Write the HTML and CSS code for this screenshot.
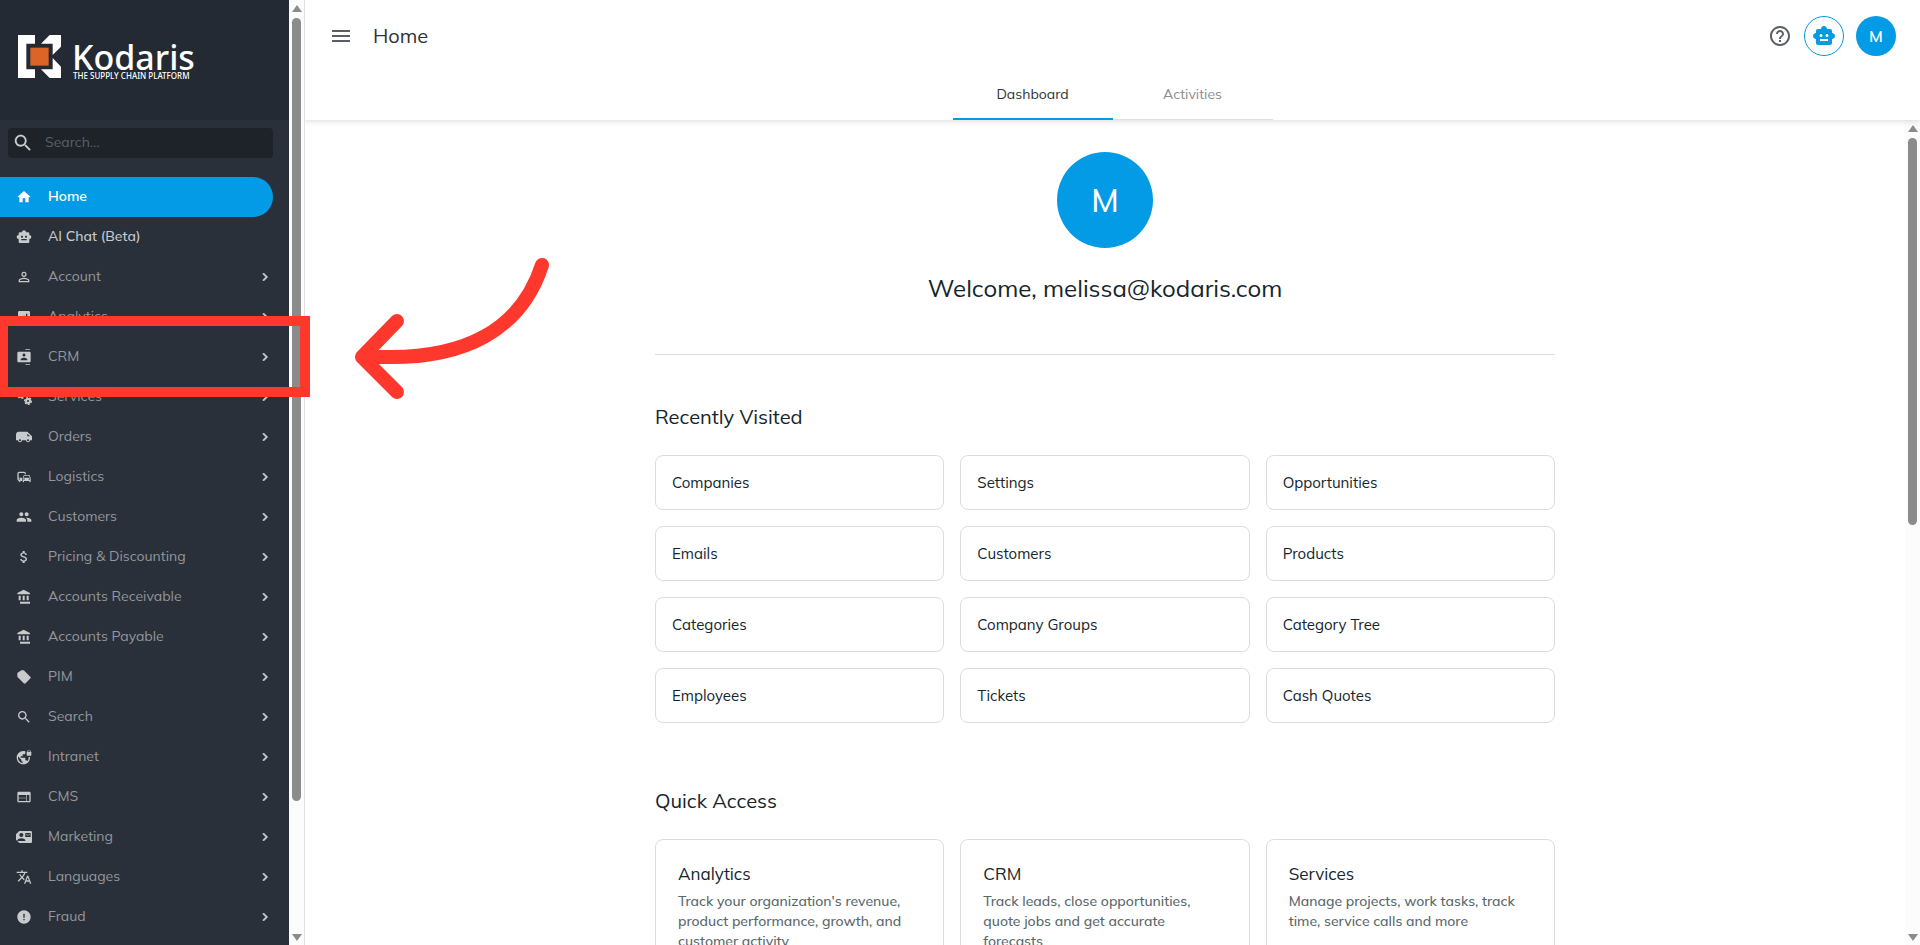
FILE: index.html
```html
<!DOCTYPE html>
<html lang="en">
<head>
    <meta charset="UTF-8">
    <meta name="viewport" content="width=device-width, initial-scale=1.0">
    <title>Home - Kodaris</title>
    <link rel="stylesheet" href="styles.css">
</head>
<body>
    <svg class="sprite" aria-hidden="true">
        <symbol id="i-home" viewBox="0 0 24 24"><path d="M10 20v-6h4v6h5v-8h3L12 3 2 12h3v8z"/></symbol>
        <symbol id="i-robot" viewBox="0 0 24 24"><path d="M20 9V7c0-1.1-.9-2-2-2h-3c0-1.66-1.34-3-3-3S9 3.34 9 5H6c-1.1 0-2 .9-2 2v2c-1.66 0-3 1.34-3 3s1.34 3 3 3v4c0 1.1.9 2 2 2h12c1.1 0 2-.9 2-2v-4c1.66 0 3-1.34 3-3s-1.34-3-3-3zM7.5 11.5c0-.83.67-1.5 1.5-1.5s1.5.67 1.5 1.5S9.83 13 9 13s-1.5-.67-1.5-1.5zM16 17H8v-2h8v2zm-1-4c-.83 0-1.5-.67-1.5-1.5S14.17 10 15 10s1.5.67 1.5 1.5S15.83 13 15 13z"/></symbol>
        <symbol id="i-person" viewBox="0 0 24 24"><path d="M12 5.9c1.16 0 2.1.94 2.1 2.1s-.94 2.1-2.1 2.1S9.9 9.16 9.9 8s.94-2.1 2.1-2.1m0 9c2.97 0 6.1 1.46 6.1 2.1v1.1H5.9V17c0-.64 3.13-2.1 6.1-2.1M12 4C9.79 4 8 5.79 8 8s1.79 4 4 4 4-1.79 4-4-1.79-4-4-4zm0 9c-2.67 0-8 1.34-8 4v3h16v-3c0-2.66-5.33-4-8-4z"/></symbol>
        <symbol id="i-analytics" viewBox="0 0 24 24"><path d="M19 3H5c-1.1 0-2 .9-2 2v14c0 1.1.9 2 2 2h14c1.1 0 2-.9 2-2V5c0-1.1-.9-2-2-2zM9 17H7v-5h2v5zm4 0h-2v-3h2v3zm0-5h-2v-2h2v2zm4 5h-2V7h2v10z"/></symbol>
        <symbol id="i-contacts" viewBox="0 0 24 24"><path d="M21 0h-7v1h7V0zM14 24h7v-1h-7v1zM20 4H4c-1.1 0-2 .9-2 2v12c0 1.1.9 2 2 2h16c1.1 0 2-.9 2-2V6c0-1.1-.9-2-2-2zm-8 2.75c1.24 0 2.25 1.01 2.25 2.25s-1.01 2.25-2.25 2.25S9.75 10.24 9.75 9 10.76 6.75 12 6.75zM17 17H7v-1.5c0-1.67 3.33-2.5 5-2.5s5 .83 5 2.5V17z"/></symbol>
        <symbol id="i-gears" viewBox="0 0 24 24"><circle cx="8" cy="8" r="4" fill="none" stroke="currentColor" stroke-width="3"/><circle cx="8" cy="8" r="6" fill="none" stroke="currentColor" stroke-width="2" stroke-dasharray="3 3"/><circle cx="18" cy="18" r="3" fill="none" stroke="currentColor" stroke-width="3"/><circle cx="18" cy="18" r="5" fill="none" stroke="currentColor" stroke-width="2" stroke-dasharray="3 2"/></symbol>
        <symbol id="i-truck" viewBox="0 0 24 24"><path d="M17 4H4C2 4 0 6 0 8v9h3c0 1.66 1.34 3 3 3s3-1.34 3-3h6c0 1.66 1.34 3 3 3s3-1.34 3-3h3v-6l-7-7zM6 18.5c-.83 0-1.5-.67-1.5-1.5s.67-1.5 1.5-1.5 1.5.67 1.5 1.5-.67 1.5-1.5 1.5zM17 7l4 4h-4V7zm1 11.5c-.83 0-1.5-.67-1.5-1.5s.67-1.5 1.5-1.5 1.5.67 1.5 1.5-.67 1.5-1.5 1.5z"/></symbol>
        <symbol id="i-commute" viewBox="0 0 24 24"><path d="M12 4H5C3.34 4 2 5.34 2 7v8c0 1.66 1.34 3 3 3l-1 1v1h1l2-2.03L9 18v-5H4V5.98L13 6v2h2V7c0-1.66-1.34-3-3-3zM5 14c.55 0 1 .45 1 1s-.45 1-1 1-1-.45-1-1 .45-1 1-1zm15.57-4.34c-.14-.4-.52-.66-.97-.66h-7.19c-.46 0-.83.26-.98.66L10 13.77l.01 5.51c0 .38.31.72.69.72h.62c.38 0 .68-.38.68-.76V18h8v1.24c0 .38.31.76.69.76h.61c.38 0 .69-.34.69-.72l.01-1.37v-4.14l-1.43-4.11zm-8.16.34h7.19l1.03 3h-9.25l1.03-3zM12 16c-.55 0-1-.45-1-1s.45-1 1-1 1 .45 1 1-.45 1-1 1zm8 0c-.55 0-1-.45-1-1s.45-1 1-1 1 .45 1 1-.45 1-1 1z"/></symbol>
        <symbol id="i-people" viewBox="0 0 24 24"><path d="M16 11c1.66 0 2.99-1.34 2.99-3S17.66 5 16 5c-1.66 0-3 1.34-3 3s1.34 3 3 3zm-8 0c1.66 0 2.99-1.34 2.99-3S9.66 5 8 5C6.34 5 5 6.34 5 8s1.34 3 3 3zm0 2c-2.33 0-7 1.17-7 3.5V19h14v-2.5c0-2.33-4.67-3.5-7-3.5zm8 0c-.29 0-.62.02-.97.05 1.16.84 1.97 1.97 1.97 3.45V19h6v-2.5c0-2.33-4.67-3.5-7-3.5z"/></symbol>
        <symbol id="i-dollar" viewBox="0 0 24 24"><path d="M11.8 10.9c-2.27-.59-3-1.2-3-2.15 0-1.09 1.01-1.85 2.7-1.85 1.78 0 2.44.85 2.5 2.1h2.21c-.07-1.72-1.12-3.3-3.21-3.81V3h-3v2.16c-1.94.42-3.5 1.68-3.5 3.61 0 2.31 1.91 3.46 4.7 4.13 2.5.6 3 1.48 3 2.41 0 .69-.49 1.79-2.7 1.79-2.06 0-2.87-.92-2.98-2.1h-2.2c.12 2.19 1.76 3.42 3.68 3.83V21h3v-2.15c1.95-.37 3.5-1.5 3.5-3.55 0-2.84-2.43-3.81-4.7-4.4z"/></symbol>
        <symbol id="i-bank" viewBox="0 0 24 24"><path d="M4 10v7h3v-7H4zm6 0v7h3v-7h-3zM6 22h15v-3H6v3zm10-12v7h3v-7h-3zm-4.5-9L2 6v2h19V6l-9.5-5z"/></symbol>
        <symbol id="i-tag" viewBox="0 0 24 24"><path d="M21.41 11.58l-9-9C12.05 2.22 11.55 2 11 2H8L2 6v5c0 .55.22 1.05.59 1.42l9 9c.36.36.86.58 1.41.58s1.05-.22 1.41-.59l7-7c.37-.36.59-.86.59-1.41s-.23-1.06-.59-1.42z"/></symbol>
        <symbol id="i-search" viewBox="0 0 24 24"><path d="M15.5 14h-.79l-.28-.27C15.41 12.59 16 11.11 16 9.5 16 5.91 13.09 3 9.5 3S3 5.91 3 9.5 5.91 16 9.5 16c1.61 0 3.09-.59 4.23-1.57l.27.28v.79l5 4.99L20.49 19l-4.99-5zm-6 0C7.01 14 5 11.99 5 9.5S7.01 5 9.5 5 14 7.01 14 9.5 11.99 14 9.5 14z"/></symbol>
        <symbol id="i-globe" viewBox="0 0 24 24"><path d="M22 4v-.5C22 2.12 20.88 1 19.5 1S17 2.12 17 3.5V4c-.55 0-1 .45-1 1v4c0 .55.45 1 1 1h5c.55 0 1-.45 1-1V5c0-.55-.45-1-1-1zm-.8 0h-3.4v-.5c0-.94.76-1.7 1.7-1.7s1.7.76 1.7 1.7V4zm-2.28 8c.04.33.08.66.08 1 0 2.08-.8 3.97-2.1 5.39-.26-.81-1-1.39-1.9-1.39h-1v-3c0-.55-.45-1-1-1H7v-2h2c.55 0 1-.45 1-1V8h2c1.1 0 2-.9 2-2V3.46c-.95-.3-1.95-.46-3-.46C5.48 3 1 7.48 1 13s4.48 10 10 10 10-4.48 10-10c0-.34-.02-.67-.05-1h-2.03zM10 20.93c-3.95-.49-7-3.85-7-7.93 0-.62.08-1.21.21-1.79L8 16v1c0 1.1.9 2 2 2v1.93z"/></symbol>
        <symbol id="i-web" viewBox="0 0 24 24"><path d="M20 4H4c-1.1 0-1.99.9-1.99 2L2 18c0 1.1.9 2 2 2h16c1.1 0 2-.9 2-2V6c0-1.1-.9-2-2-2zm-5 14H4v-4h11v4zm0-5H4V9h11v4zm5 5h-4V9h4v9z"/></symbol>
        <symbol id="i-mail" viewBox="0 0 24 24"><path d="M21 8V7l-3 2-3-2v1l3 2 3-2zm1-5H5L0 8v8l5 5h17c1.1 0 1.99-.9 1.99-2L24 5c0-1.1-.9-2-2-2zM8 6c1.66 0 3 1.34 3 3s-1.34 3-3 3-3-1.34-3-3 1.34-3 3-3zm6 12H2v-1c0-2 4-3.1 6-3.1s6 1.1 6 3.1v1zm8-6h-8V6h8v6z"/></symbol>
        <symbol id="i-translate" viewBox="0 0 24 24"><path d="M12.87 15.07l-2.54-2.51.03-.03c1.74-1.94 2.98-4.17 3.71-6.53H17V4h-7V2H8v2H1v1.99h11.17C11.5 7.92 10.44 9.75 9 11.35 8.07 10.32 7.3 9.19 6.69 8h-2c.73 1.63 1.73 3.17 2.98 4.56l-5.09 5.02L4 19l5-5 3.11 3.11.76-2.04zM18.5 10h-2L12 22h2l1.12-3h4.75L21 22h2l-4.5-12zm-2.62 7l1.62-4.33L19.12 17h-3.24z"/></symbol>
        <symbol id="i-error" viewBox="0 0 24 24"><path d="M12 2C6.48 2 2 6.48 2 12s4.48 10 10 10 10-4.48 10-10S17.52 2 12 2zm1 15h-2v-2h2v2zm0-4h-2V7h2v6z"/></symbol>
        <symbol id="i-chevron" viewBox="0 0 24 24"><path stroke="currentColor" d="M10 6L8.59 7.41 13.17 12l-4.58 4.59L10 18l6-6z"/></symbol>
        <symbol id="i-menu" viewBox="0 0 24 24"><path d="M3 18h18v-2H3v2zm0-5h18v-2H3v2zm0-7v2h18V6H3z"/></symbol>
        <symbol id="i-help" viewBox="0 0 24 24"><path d="M11 18h2v-2h-2v2zm1-16C6.48 2 2 6.48 2 12s4.48 10 10 10 10-4.48 10-10S17.52 2 12 2zm0 18c-4.41 0-8-3.59-8-8s3.59-8 8-8 8 3.59 8 8-3.59 8-8 8zm0-14c-2.21 0-4 1.79-4 4h2c0-1.1.9-2 2-2s2 .9 2 2c0 2-3 1.75-3 5h2c0-2.25 3-2.5 3-5 0-2.21-1.79-4-4-4z"/></symbol>
    </svg>

    <div class="app">
        <aside class="sidebar">
            <div class="sidebar-inner">
                <a class="brand" href="#">
                    <svg class="brand-mark" viewBox="53 105 129 129">
                        <path fill="#fff" d="M53 105h51v26H78v77h26v26H53zM148 105h34v35l-25 25v-34h-35zM157 174l25 26v34h-34l-26-26h35z"/>
                        <path fill="#dc6426" d="M90 143h55v54H90z"/>
                    </svg>
                    <span class="brand-text">
                        <span class="brand-name">Kodaris</span>
                        <span class="brand-tag">THE SUPPLY CHAIN PLATFORM</span>
                    </span>
                </a>

                <label class="search">
                    <svg class="search-icon"><use href="#i-search"/></svg>
                    <input type="text" placeholder="Search..." aria-label="Search">
                </label>

                <nav class="nav">
                    <a class="nav-item active" href="#"><svg class="icon"><use href="#i-home"/></svg><span>Home</span></a>
                    <a class="nav-item bright" href="#"><svg class="icon"><use href="#i-robot"/></svg><span>AI Chat (Beta)</span></a>
                    <a class="nav-item" href="#"><svg class="icon"><use href="#i-person"/></svg><span>Account</span><svg class="icon"><use href="#i-chevron"/></svg></a>
                    <a class="nav-item" href="#"><svg class="icon"><use href="#i-analytics"/></svg><span>Analytics</span><svg class="icon"><use href="#i-chevron"/></svg></a>
                    <a class="nav-item" href="#"><svg class="icon"><use href="#i-contacts"/></svg><span>CRM</span><svg class="icon"><use href="#i-chevron"/></svg></a>
                    <a class="nav-item" href="#"><svg class="icon"><use href="#i-gears"/></svg><span>Services</span><svg class="icon"><use href="#i-chevron"/></svg></a>
                    <a class="nav-item" href="#"><svg class="icon"><use href="#i-truck"/></svg><span>Orders</span><svg class="icon"><use href="#i-chevron"/></svg></a>
                    <a class="nav-item" href="#"><svg class="icon"><use href="#i-commute"/></svg><span>Logistics</span><svg class="icon"><use href="#i-chevron"/></svg></a>
                    <a class="nav-item" href="#"><svg class="icon"><use href="#i-people"/></svg><span>Customers</span><svg class="icon"><use href="#i-chevron"/></svg></a>
                    <a class="nav-item" href="#"><svg class="icon"><use href="#i-dollar"/></svg><span>Pricing &amp; Discounting</span><svg class="icon"><use href="#i-chevron"/></svg></a>
                    <a class="nav-item" href="#"><svg class="icon"><use href="#i-bank"/></svg><span>Accounts Receivable</span><svg class="icon"><use href="#i-chevron"/></svg></a>
                    <a class="nav-item" href="#"><svg class="icon"><use href="#i-bank"/></svg><span>Accounts Payable</span><svg class="icon"><use href="#i-chevron"/></svg></a>
                    <a class="nav-item" href="#"><svg class="icon"><use href="#i-tag"/></svg><span>PIM</span><svg class="icon"><use href="#i-chevron"/></svg></a>
                    <a class="nav-item" href="#"><svg class="icon"><use href="#i-search"/></svg><span>Search</span><svg class="icon"><use href="#i-chevron"/></svg></a>
                    <a class="nav-item" href="#"><svg class="icon"><use href="#i-globe"/></svg><span>Intranet</span><svg class="icon"><use href="#i-chevron"/></svg></a>
                    <a class="nav-item" href="#"><svg class="icon"><use href="#i-web"/></svg><span>CMS</span><svg class="icon"><use href="#i-chevron"/></svg></a>
                    <a class="nav-item" href="#"><svg class="icon"><use href="#i-mail"/></svg><span>Marketing</span><svg class="icon"><use href="#i-chevron"/></svg></a>
                    <a class="nav-item" href="#"><svg class="icon"><use href="#i-translate"/></svg><span>Languages</span><svg class="icon"><use href="#i-chevron"/></svg></a>
                    <a class="nav-item" href="#"><svg class="icon"><use href="#i-error"/></svg><span>Fraud</span><svg class="icon"><use href="#i-chevron"/></svg></a>
                </nav>
            </div>
            <div class="scrollbar">
                <span class="arrow-up"></span>
                <div class="track"><div class="thumb thumb-nav"></div></div>
                <span class="arrow-down"></span>
            </div>
        </aside>

        <div class="page">
            <header class="header">
                <div class="toolbar">
                    <button class="icon-btn" aria-label="Menu"><svg><use href="#i-menu"/></svg></button>
                    <h1>Home</h1>
                    <button class="icon-btn" aria-label="Help"><svg><use href="#i-help"/></svg></button>
                    <button class="round-btn outlined" aria-label="AI Chat"><svg><use href="#i-robot"/></svg></button>
                    <button class="round-btn">M</button>
                </div>
                <nav class="tabs">
                    <a class="tab active" href="#">Dashboard</a>
                    <a class="tab" href="#">Activities</a>
                </nav>
            </header>

            <div class="body">
                <main class="content">
                    <section class="welcome">
                        <div class="avatar">M</div>
                        <h2>Welcome, melissa@kodaris.com</h2>
                    </section>

                    <section class="recent">
                        <h3>Recently Visited</h3>
                        <div class="grid">
                            <a class="card" href="#">Companies</a>
                            <a class="card" href="#">Settings</a>
                            <a class="card" href="#">Opportunities</a>
                            <a class="card" href="#">Emails</a>
                            <a class="card" href="#">Customers</a>
                            <a class="card" href="#">Products</a>
                            <a class="card" href="#">Categories</a>
                            <a class="card" href="#">Company Groups</a>
                            <a class="card" href="#">Category Tree</a>
                            <a class="card" href="#">Employees</a>
                            <a class="card" href="#">Tickets</a>
                            <a class="card" href="#">Cash Quotes</a>
                        </div>
                    </section>

                    <section class="quick">
                        <h3>Quick Access</h3>
                        <div class="grid">
                            <a class="card tall" href="#">
                                <h4>Analytics</h4>
                                <p>Track your organization's revenue, product performance, growth, and customer activity</p>
                            </a>
                            <a class="card tall" href="#">
                                <h4>CRM</h4>
                                <p>Track leads, close opportunities, quote jobs and get accurate forecasts</p>
                            </a>
                            <a class="card tall" href="#">
                                <h4>Services</h4>
                                <p>Manage projects, work tasks, track time, service calls and more</p>
                            </a>
                        </div>
                    </section>
                </main>
                <div class="scrollbar">
                    <span class="arrow-up"></span>
                    <div class="track"><div class="thumb thumb-page"></div></div>
                    <span class="arrow-down"></span>
                </div>
            </div>
        </div>
    </div>

    <!-- callout over the CRM menu item -->
    <div class="callout-box"></div>
    <svg class="callout-arrow" viewBox="350 250 204 156">
        <path d="M542 265C522 327 467 364 364 356M397 321L362 357L397 392"/>
    </svg>
</body>
</html>
```

FILE: styles.css
```css
* {
    box-sizing: border-box;
}
body {
    margin: 0;
    font-family: Mulish, Muli, Lato, sans-serif;
    font-size: 14px;
    color: #14262b;
    background: #fff;
    overflow: hidden;
}
a {
    color: inherit;
    text-decoration: none;
}
button {
    font: inherit;
    padding: 0;
    border: none;
    background: none;
    cursor: pointer;
}
h1, h2, h3, h4, p {
    margin: 0;
    font-weight: 400;
}
svg {
    fill: currentColor;
}
.sprite {
    position: absolute;
    width: 0;
    height: 0;
}
.app {
    display: flex;
    height: 100vh;
}

/* sidebar */
.sidebar {
    display: flex;
    flex: 0 0 305px;
    border-right: 1px solid #e0e0e0;
}
.sidebar-inner {
    flex: 1;
    overflow: hidden;
    background: #2a303a;
}
.brand {
    display: flex;
    gap: 11px;
    height: 120px;
    padding: 35px 18px;
    background: #232a34;
    color: #fff;
}
.brand-mark {
    width: 43px;
    height: 43px;
}
.brand-text {
    display: flex;
    flex-direction: column;
    font-family: "Noto Sans", sans-serif;
}
.brand-name {
    padding-top: 8px;
    font-size: 34px;
    font-weight: 500;
    line-height: 29px;
}
.brand-tag {
    padding-left: 1px;
    font-size: 8px;
    font-weight: 500;
    line-height: 8px;
    white-space: nowrap;
}
.search {
    display: flex;
    align-items: center;
    height: 30px;
    margin: 8px 16px 19px 8px;
    padding-left: 4px;
    background: #1e2329;
    border-radius: 4px;
    color: #c8cacc;
}
.search-icon {
    width: 22px;
    height: 22px;
}
.search input {
    flex: 1;
    min-width: 0;
    padding: 0 11px 2px;
    border: none;
    outline: none;
    background: none;
    color: #fff;
    font: inherit;
}
.search input::placeholder {
    color: #596066;
}
.nav-item {
    display: flex;
    align-items: center;
    height: 40px;
    margin-right: 16px;
    padding-left: 16px;
    color: #c8cacc;
}
.nav-item span {
    flex: 1;
    padding: 0 0 2px 16px;
    line-height: 20px;
    color: #94979c;
}
.nav-item.active {
    background: #039be5;
    border-radius: 0 20px 20px 0;
    color: #fff;
}
.nav-item.active span {
    color: #fff;
    font-weight: 600;
}
.nav-item.bright span {
    color: #c8cacc;
    font-weight: 500;
}
.icon {
    width: 16px;
    height: 16px;
}

/* scrollbars */
.scrollbar {
    display: flex;
    flex: 0 0 15px;
    flex-direction: column;
    align-items: center;
    justify-content: space-between;
    gap: 6px;
    padding: 5px 2px 4px;
    background: #fcfcfc;
}
.track {
    flex: 1;
    width: 9px;
}
.thumb {
    border-radius: 5px;
    background: #8b8b8b;
}
.thumb-nav {
    height: 86%;
}
.thumb-page {
    height: 49%;
}
.arrow-up,
.arrow-down {
    border: 5px solid transparent;
}
.arrow-up {
    border-top: none;
    border-bottom: 7px solid #8b8b8b;
}
.arrow-down {
    border-bottom: none;
    border-top: 7px solid #8b8b8b;
}

/* header */
.page {
    display: flex;
    flex: 1;
    flex-direction: column;
    min-width: 0;
}
.header {
    height: 120px;
    flex: none;
    z-index: 1;
    background: #fff;
    box-shadow: 0 1px 6px rgba(0, 0, 0, 0.15);
    clip-path: inset(0 0 -8px 0);
}
.toolbar {
    display: flex;
    align-items: center;
    gap: 12px;
    height: 72px;
    padding: 0 24px;
}
.toolbar h1 {
    flex: 1;
    padding-left: 8px;
    font-size: 20px;
    line-height: 28px;
    color: #303336;
}
.icon-btn {
    width: 24px;
    height: 24px;
    color: #5a5f66;
}
.icon-btn svg {
    display: block;
    width: 24px;
    height: 24px;
}
.round-btn {
    display: flex;
    align-items: center;
    justify-content: center;
    width: 40px;
    height: 40px;
    border-radius: 50%;
    background: #039be5;
    color: #fff;
    font-size: 16px;
    font-weight: 600;
}
.round-btn.outlined {
    border: 1px solid #039be5;
    background: #fff;
    color: #039be5;
}
.round-btn svg {
    width: 24px;
    height: 24px;
}
.tabs {
    display: flex;
    justify-content: center;
    height: 48px;
}
.tab {
    width: 160px;
    line-height: 45px;
    border-bottom: 1px solid #e0e0e0;
    text-align: center;
    color: #8a8c8f;
}
.tab.active {
    border-bottom: 2px solid #039be5;
    color: #303336;
}

/* dashboard */
.body {
    display: flex;
    flex: 1;
    min-height: 0;
}
.content {
    flex: 1;
    overflow: hidden;
    padding: 32px 24px 0;
}
.content section {
    max-width: 900px;
    margin: 0 auto;
}
.welcome {
    display: flex;
    flex-direction: column;
    align-items: center;
    gap: 24px;
    padding-bottom: 49px;
    border-bottom: 1px solid #dcdcdc;
}
.avatar {
    width: 96px;
    height: 96px;
    border-radius: 50%;
    background: #039be5;
    color: #fff;
    font-size: 32px;
    font-weight: 500;
    line-height: 96px;
    text-align: center;
}
.welcome h2 {
    font-size: 24px;
    line-height: 33px;
}
.recent {
    padding-top: 48px;
}
.quick {
    padding-top: 64px;
}
h3 {
    margin-bottom: 24px;
    font-size: 20px;
    line-height: 28px;
}
.grid {
    display: grid;
    grid-template-columns: repeat(3, 1fr);
    gap: 16px;
}
.card {
    padding: 18px 16px 17px;
    border: 1px solid #dcdcdc;
    border-radius: 8px;
    font-size: 15px;
    line-height: 18px;
}
.card.tall {
    padding: 22px;
}
.card h4 {
    margin-bottom: 5px;
    font-size: 17px;
    line-height: 24px;
}
.card p {
    padding-right: 8px;
    font-size: 14px;
    font-weight: 500;
    line-height: 20px;
    color: #5a676b;
}

/* callout */
.callout-box {
    position: absolute;
    left: -2px;
    top: 316px;
    width: 312px;
    height: 81px;
    border: 10px solid #ff382d;
}
.callout-arrow {
    position: absolute;
    left: 350px;
    top: 250px;
    width: 204px;
    height: 156px;
    fill: none;
    stroke: #ff382d;
    stroke-width: 14px;
    stroke-linecap: round;
    stroke-linejoin: round;
}
```
